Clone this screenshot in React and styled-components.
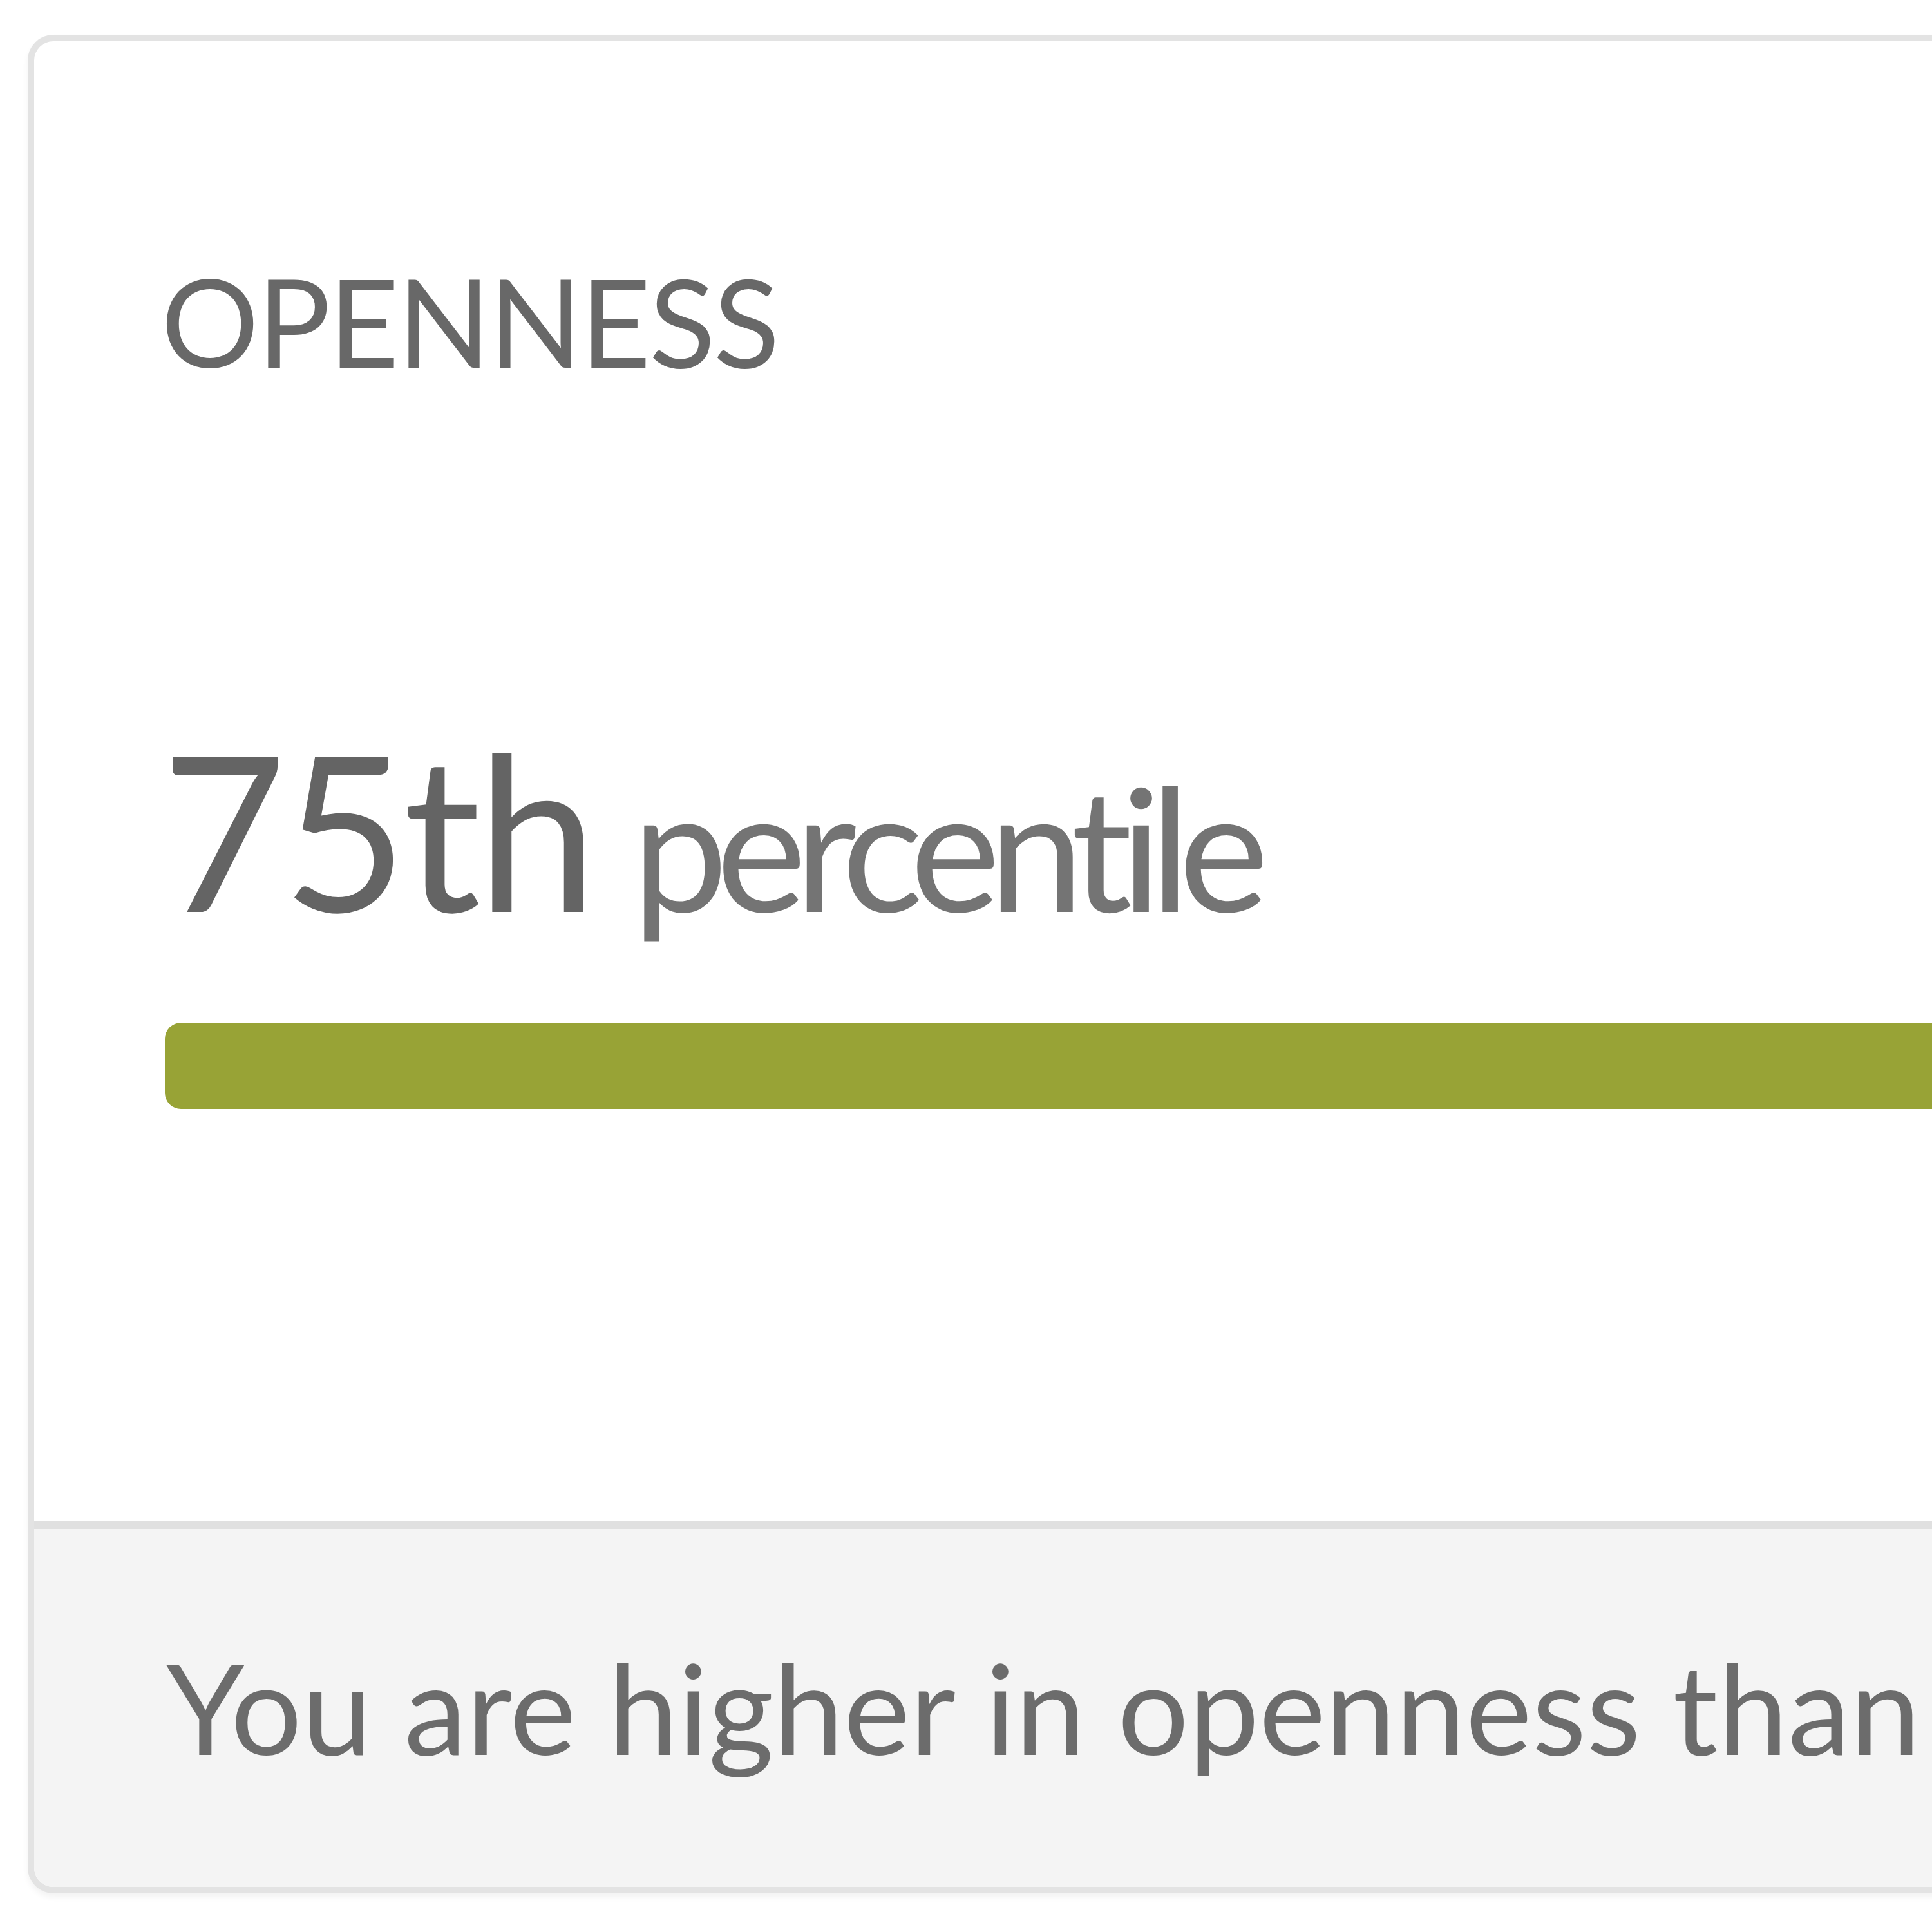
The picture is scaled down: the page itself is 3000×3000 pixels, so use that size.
import React from "react";
import styled, { createGlobalStyle } from "styled-components";

const GlobalStyle = createGlobalStyle`
	html, body {
		margin: 0;
		padding: 0;
		background: #ffffff;
		overflow: hidden;
	}
	body {
		font-family: Lato, "Open Sans", sans-serif;
	}
`;

const Page = styled.div`
	padding: 54px 0 0 43px;
	width: 3000px;
	height: 3000px;
	box-sizing: border-box;
`;

const Card = styled.section`
	width: 4000px;
	border: 10px solid #e3e3e3;
	border-radius: 40px;
	overflow: hidden;
	background: #ffffff;
	box-shadow: 0 6px 10px rgba(0, 0, 0, 0.05);
`;

const CardBody = styled.div`
	padding: 338px 0 640px 197px;
`;

const Trait = styled.h3`
	margin: 0;
	font-size: 190px;
	line-height: 1;
	font-weight: 400;
	letter-spacing: -3px;
	color: #686868;
	text-transform: uppercase;
`;

const Score = styled.div`
	margin-top: 527px;
	font-size: 335px;
	line-height: 1;
	letter-spacing: -6px;
	color: #646464;
	white-space: nowrap;
`;

const Unit = styled.span`
	font-size: 265px;
	letter-spacing: -18px;
	color: #747474;
	margin-left: 60px;
`;

const Track = styled.div`
	margin-top: 134px;
	margin-left: 6px;
	height: 134px;
	border-radius: 25px;
`;

const Fill = styled.div`
	height: 100%;
	border-radius: 25px;
	background: #98a336;
`;

const CardFooter = styled.div`
	border-top: 12px solid #e0e0e0;
	background: #f4f4f4;
	padding: 179px 0 182px 205px;
`;

const Summary = styled.p`
	margin: 0;
	font-size: 195px;
	line-height: 1;
	color: #6c6c6c;
	white-space: nowrap;
`;

const trait = { name: "Openness", percentile: 75 };

export default function App() {
	return (
		<>
			<GlobalStyle />
			<Page>
				<Card>
					<CardBody>
						<Trait>{trait.name}</Trait>
						<Score>
							{trait.percentile}th<Unit>percentile</Unit>
						</Score>
						<Track>
							<Fill style={{ width: `${trait.percentile}%` }} />
						</Track>
					</CardBody>
					<CardFooter>
						<Summary>
							You are higher in {trait.name.toLowerCase()} than
						</Summary>
					</CardFooter>
				</Card>
			</Page>
		</>
	);
}
